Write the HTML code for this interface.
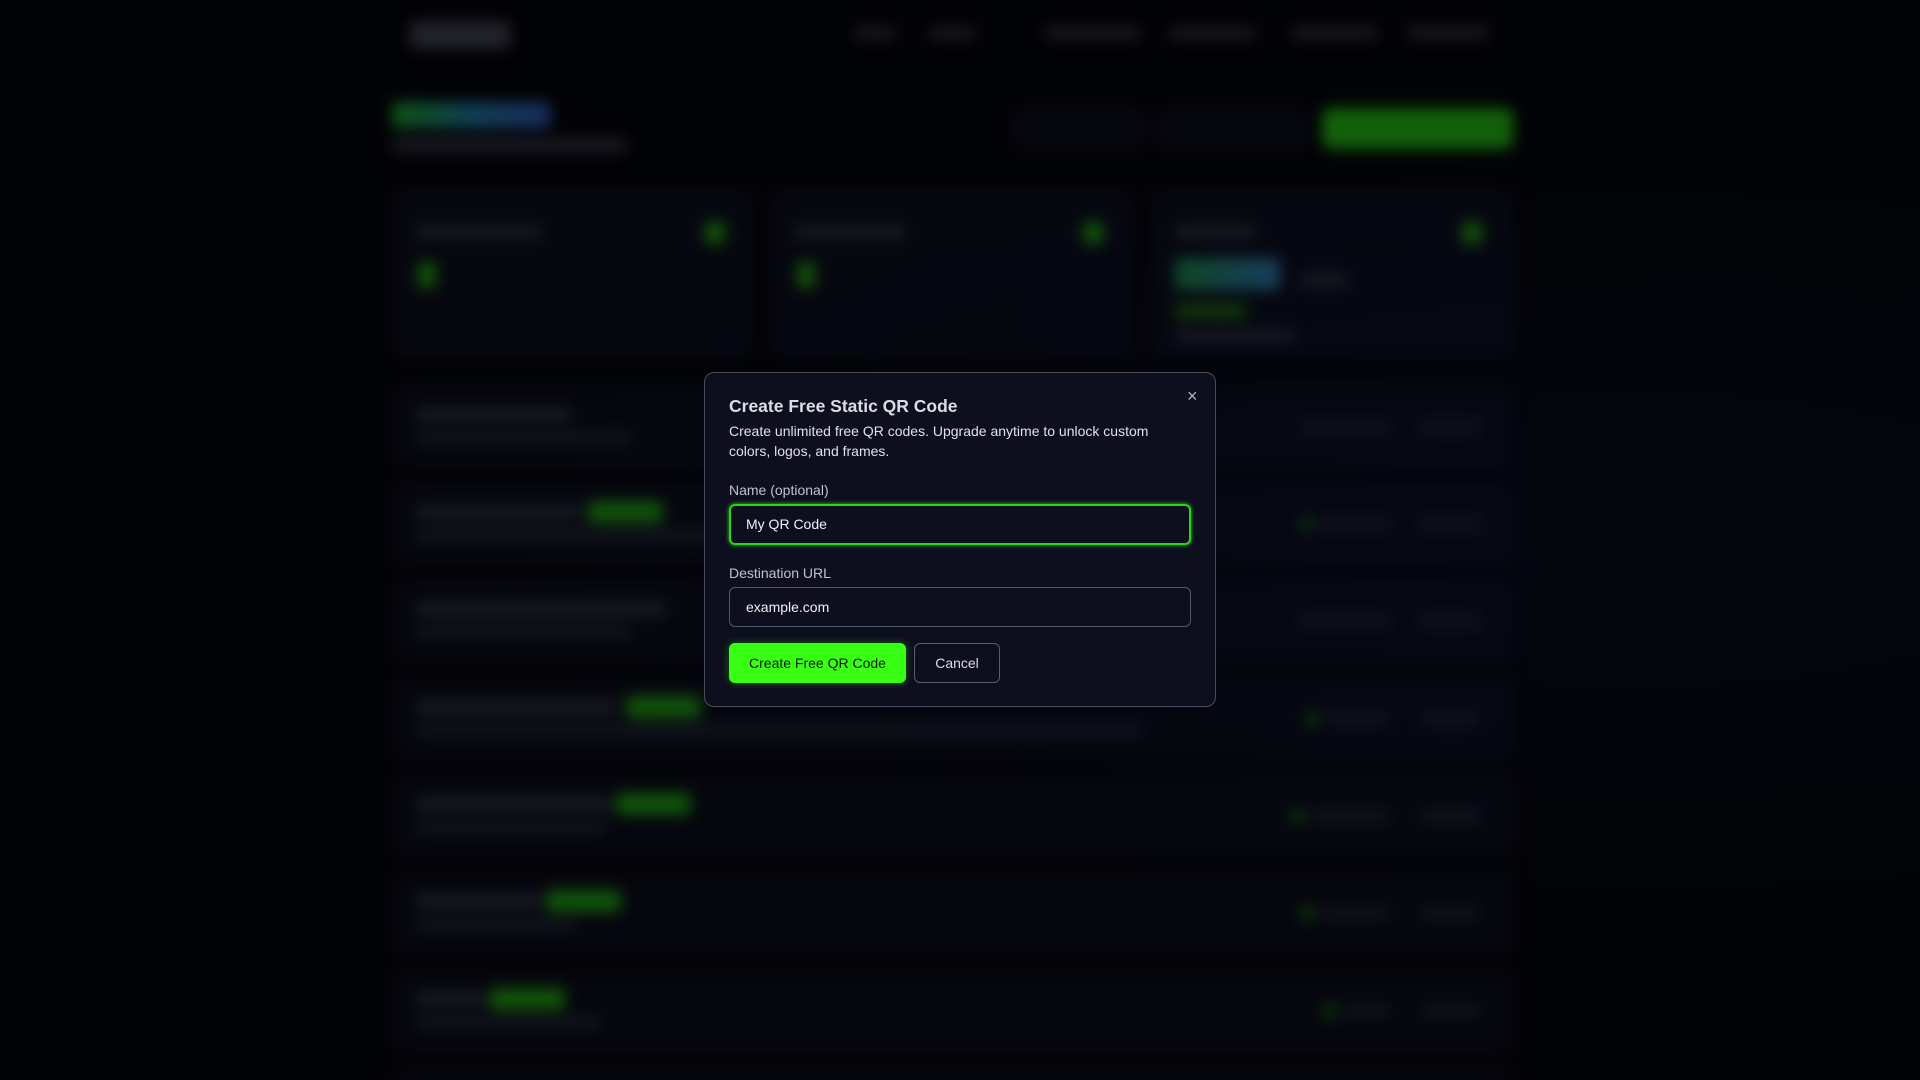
<!DOCTYPE html>
<html style="width:1920px;height:1080px;overflow:hidden"><head><meta charset="utf-8"><style>
*{box-sizing:border-box;margin:0;padding:0}
body{width:1920px;height:1080px;overflow:hidden;background:#04050b;font-family:"Liberation Sans",Arial,sans-serif;position:relative}
#wrap{position:absolute;left:0;top:0;width:1920px;height:1080px;overflow:hidden}
#bg{position:absolute;left:0;top:0;width:1920px;height:1080px;filter:blur(7px)}
.a{position:absolute}
.card{position:absolute;background:#0b0d1a;border:1px solid #161a28;border-radius:10px}
.row{position:absolute;left:392px;width:1121px;height:80px;background:#0a0c18;border:1px solid #141826;border-radius:10px}
.t{position:absolute;background:#2a2c38;border-radius:3px}
.g{position:absolute;background:#1f8a10;border-radius:5px}
#ov{position:absolute;left:0;top:0;width:1920px;height:1080px;background:radial-gradient(ellipse at 85% 50%,rgba(10,14,40,0.25),rgba(0,0,0,0) 50%),rgba(0,0,0,0.4)}
#modal{position:absolute;left:704px;top:372px;width:512px;height:335px;background:#0d0f1e;border:1px solid #4a4c58;border-radius:10px;color:#e6e7ec}
h2{position:absolute;left:24px;top:23px;font-size:17.5px;font-weight:bold;color:#dcdde3}
.desc{position:absolute;left:24px;top:48px;width:440px;font-size:14px;line-height:20px;color:#e0e1e6}
.lbl{position:absolute;left:24px;font-size:14px;color:#c0c2ca}
.inp{position:absolute;left:24px;width:462px;height:40px;border:1px solid #555866;border-radius:6px;font-size:14px;padding-left:16px;line-height:38px;color:#f0f0f3}
.btn{position:absolute;top:270px;height:40px;border-radius:6px;font-size:14px;line-height:40px;text-align:center}
</style></head><body>
<div id="wrap">
<div id="bg">
 <div class="t" style="left:410px;top:22px;width:100px;height:26px;background:#3a3c48"></div>
 <div class="t" style="left:855px;top:27px;width:40px;height:12px"></div>
 <div class="t" style="left:930px;top:27px;width:45px;height:12px"></div>
 <div class="t" style="left:1045px;top:27px;width:95px;height:12px"></div>
 <div class="t" style="left:1170px;top:27px;width:85px;height:12px"></div>
 <div class="t" style="left:1292px;top:27px;width:85px;height:12px"></div>
 <div class="t" style="left:1408px;top:27px;width:80px;height:12px"></div>
 <div class="a" style="left:392px;top:102px;width:158px;height:26px;background:linear-gradient(90deg,#1a8a20,#1a6a8a,#2a4a9a);border-radius:3px"></div>
 <div class="t" style="left:392px;top:138px;width:235px;height:14px"></div>
 <div class="card" style="left:1014px;top:108px;width:131px;height:41px"></div>
 <div class="card" style="left:1157px;top:108px;width:151px;height:41px"></div>
 <div class="a" style="left:1322px;top:108px;width:191px;height:41px;background:#1fa012;border-radius:8px"></div>
 <div class="card" style="left:392px;top:190px;width:361px;height:165px"></div>
 <div class="card" style="left:771px;top:190px;width:362px;height:165px"></div>
 <div class="card" style="left:1151px;top:190px;width:362px;height:165px"></div>
 <div class="t" style="left:416px;top:226px;width:125px;height:12px"></div>
 <div class="g" style="left:705px;top:222px;width:20px;height:22px"></div>
 <div class="g" style="left:418px;top:262px;width:18px;height:26px"></div>
 <div class="t" style="left:795px;top:226px;width:110px;height:12px"></div>
 <div class="g" style="left:1083px;top:222px;width:20px;height:22px"></div>
 <div class="g" style="left:797px;top:262px;width:18px;height:26px"></div>
 <div class="t" style="left:1175px;top:226px;width:80px;height:12px"></div>
 <div class="g" style="left:1462px;top:222px;width:20px;height:22px"></div>
 <div class="a" style="left:1175px;top:258px;width:105px;height:32px;background:linear-gradient(90deg,#1a7a40,#2a6aa0);border-radius:3px"></div>
 <div class="t" style="left:1300px;top:274px;width:48px;height:12px"></div>
 <div class="g" style="left:1175px;top:303px;width:72px;height:16px;background:#1a5a10"></div>
 <div class="t" style="left:1175px;top:330px;width:120px;height:12px"></div>
 <div class="row" style="top:387px"></div><div class="row" style="top:484px"></div><div class="row" style="top:581px"></div><div class="row" style="top:679px"></div><div class="row" style="top:776px"></div><div class="row" style="top:873px"></div><div class="row" style="top:971px"></div><div class="row" style="top:1068px;height:12px;border-radius:10px 10px 0 0"></div>
 <div class="t" style="left:416px;top:408px;width:155px;height:14px"></div><div class="t" style="left:416px;top:432px;width:215px;height:12px;background:#202230"></div>
 <div class="t" style="left:416px;top:505px;width:165px;height:14px"></div><div class="g" style="left:588px;top:501px;width:75px;height:22px;background:#1c8a10"></div><div class="t" style="left:416px;top:529px;width:300px;height:12px;background:#202230"></div>
 <div class="t" style="left:416px;top:602px;width:250px;height:14px"></div><div class="t" style="left:416px;top:626px;width:215px;height:12px;background:#202230"></div>
 <div class="t" style="left:416px;top:700px;width:200px;height:14px"></div><div class="g" style="left:626px;top:696px;width:75px;height:22px;background:#1c8a10"></div><div class="t" style="left:416px;top:724px;width:725px;height:12px;background:#202230"></div>
 <div class="t" style="left:416px;top:797px;width:195px;height:14px"></div><div class="g" style="left:616px;top:793px;width:75px;height:22px;background:#1c8a10"></div><div class="t" style="left:416px;top:821px;width:190px;height:12px;background:#202230"></div>
 <div class="t" style="left:416px;top:894px;width:125px;height:14px"></div><div class="g" style="left:546px;top:890px;width:75px;height:22px;background:#1c8a10"></div><div class="t" style="left:416px;top:918px;width:160px;height:12px;background:#202230"></div>
 <div class="t" style="left:416px;top:992px;width:70px;height:14px"></div><div class="g" style="left:490px;top:988px;width:75px;height:22px;background:#1c8a10"></div><div class="t" style="left:416px;top:1016px;width:185px;height:12px;background:#202230"></div>
 <div class="t" style="left:1300px;top:420px;width:90px;height:14px;background:#1c1e2a"></div><div class="t" style="left:1420px;top:420px;width:60px;height:14px;background:#1c1e2a"></div>
 <div class="g" style="left:1300px;top:517px;width:14px;height:14px;background:#145a0c"></div><div class="t" style="left:1320px;top:517px;width:70px;height:14px;background:#1c1e2a"></div><div class="t" style="left:1420px;top:517px;width:60px;height:14px;background:#1c1e2a"></div>
 <div class="t" style="left:1300px;top:614px;width:90px;height:14px;background:#1c1e2a"></div><div class="t" style="left:1420px;top:614px;width:60px;height:14px;background:#1c1e2a"></div>
 <div class="g" style="left:1305px;top:712px;width:14px;height:14px;background:#145a0c"></div><div class="t" style="left:1325px;top:712px;width:65px;height:14px;background:#1c1e2a"></div><div class="t" style="left:1420px;top:712px;width:60px;height:14px;background:#1c1e2a"></div>
 <div class="g" style="left:1290px;top:809px;width:14px;height:14px;background:#145a0c"></div><div class="t" style="left:1310px;top:809px;width:80px;height:14px;background:#1c1e2a"></div><div class="t" style="left:1420px;top:809px;width:60px;height:14px;background:#1c1e2a"></div>
 <div class="g" style="left:1300px;top:906px;width:14px;height:14px;background:#145a0c"></div><div class="t" style="left:1320px;top:906px;width:70px;height:14px;background:#1c1e2a"></div><div class="t" style="left:1420px;top:906px;width:60px;height:14px;background:#1c1e2a"></div>
 <div class="g" style="left:1322px;top:1004px;width:14px;height:14px;background:#145a0c"></div><div class="t" style="left:1342px;top:1004px;width:48px;height:14px;background:#1c1e2a"></div><div class="t" style="left:1420px;top:1004px;width:60px;height:14px;background:#1c1e2a"></div>
</div>
<div id="ov"></div>
<div id="modal">
 <h2>Create Free Static QR Code</h2>
 <div style="position:absolute;left:482px;top:13px;color:#b0b2ba;font-size:18px">×</div>
 <div class="desc">Create unlimited free QR codes. Upgrade anytime to unlock custom colors, logos, and frames.</div>
 <div class="lbl" style="top:109px">Name (optional)</div>
 <div class="inp" style="top:131px;height:41px;border:2px solid #2bd615;box-shadow:0 0 4px #2bd615;padding-left:15px;line-height:37px">My QR Code</div>
 <div class="lbl" style="top:192px">Destination URL</div>
 <div class="inp" style="top:214px">example.com</div>
 <div class="btn" style="left:24px;width:177px;background:#39ff14;color:#0a1a05;box-shadow:0 0 8px rgba(57,255,20,.35)">Create Free QR Code</div>
 <div class="btn" style="left:209px;width:86px;border:1px solid #5a5c68;color:#dcdde3;line-height:38px">Cancel</div>
</div>
</div>
</body></html>
